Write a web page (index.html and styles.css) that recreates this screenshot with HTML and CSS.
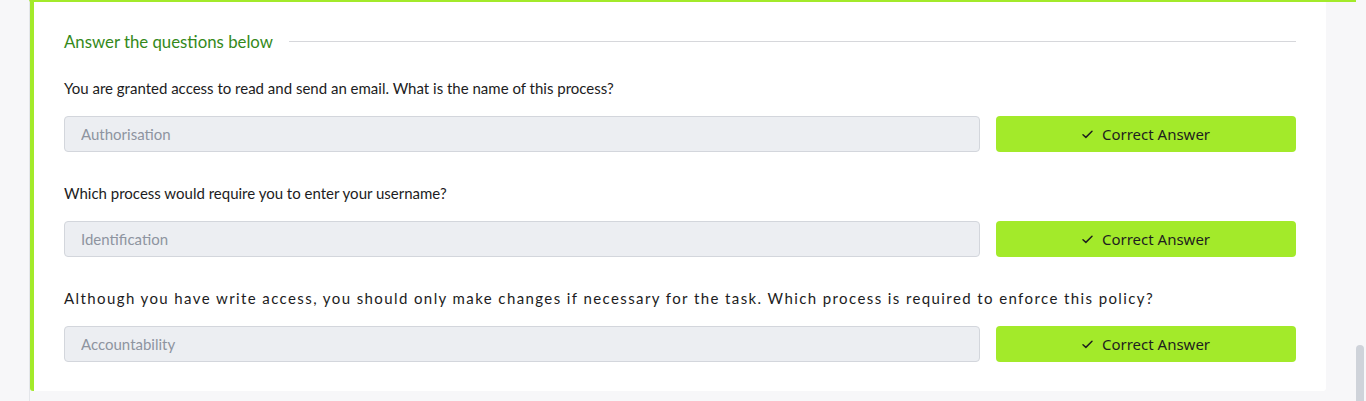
FILE: index.html
```html
<!DOCTYPE html>
<html lang="en">
<head>
<meta charset="utf-8">
<title>Answer the questions below</title>
<link rel="stylesheet" href="styles.css">
</head>
<body>
<div class="page">
  <div class="frame">
    <section class="card">
      <div class="heading">
        <h3>Answer the questions below</h3>
        <span class="rule"></span>
      </div>

      <div class="question first">
        <p class="q-text">You are granted access to read and send an email. What is the name of this process?</p>
        <div class="answer-row">
          <input class="answer" type="text" placeholder="Authorisation" disabled>
          <button class="correct" type="button">
            <svg class="check" viewBox="0 0 12 10" width="11" height="9"><path d="M1 5.2 L4.2 8.2 L11 1.5" fill="none" stroke="#1e1e1e" stroke-width="1.6" stroke-linecap="round" stroke-linejoin="round"/></svg>
            <span>Correct Answer</span>
          </button>
        </div>
      </div>

      <div class="question">
        <p class="q-text">Which process would require you to enter your username?</p>
        <div class="answer-row">
          <input class="answer" type="text" placeholder="Identification" disabled>
          <button class="correct" type="button">
            <svg class="check" viewBox="0 0 12 10" width="11" height="9"><path d="M1 5.2 L4.2 8.2 L11 1.5" fill="none" stroke="#1e1e1e" stroke-width="1.6" stroke-linecap="round" stroke-linejoin="round"/></svg>
            <span>Correct Answer</span>
          </button>
        </div>
      </div>

      <div class="question">
        <p class="q-text wide">Although you have write access, you should only make changes if necessary for the task. Which process is required to enforce this policy?</p>
        <div class="answer-row">
          <input class="answer" type="text" placeholder="Accountability" disabled>
          <button class="correct" type="button">
            <svg class="check" viewBox="0 0 12 10" width="11" height="9"><path d="M1 5.2 L4.2 8.2 L11 1.5" fill="none" stroke="#1e1e1e" stroke-width="1.6" stroke-linecap="round" stroke-linejoin="round"/></svg>
            <span>Correct Answer</span>
          </button>
        </div>
      </div>
    </section>
  </div>
</div>
<div class="scroll-thumb"></div>
</body>
</html>
```
FILE: styles.css
```css
html, body {
  margin: 0;
  padding: 0;
  height: 401px;
  overflow: hidden;
  background: #f7f7f9;
  font-family: Lato, "Open Sans", sans-serif;
}

.page {
  padding: 0 10px 0 29px;
  height: 401px;
  box-sizing: border-box;
}

.frame {
  border-top: 2px solid #a3ea2a;
  border-left: 1px solid #e4e6ea;
  height: 399px;
  padding-right: 30px;
}

.card {
  background: #ffffff;
  border-left: 4px solid #a3ea2a;
  border-bottom-left-radius: 3px;
  border-bottom-right-radius: 3px;
  padding: 28px 30px 29px 30px;
}

.heading {
  display: flex;
  align-items: center;
  gap: 16px;
  height: 24px;
}

.heading h3 {
  margin: 0;
  font-size: 16.8px;
  font-weight: 400;
  color: #34891a;
  line-height: 24px;
  white-space: nowrap;
}

.heading .rule {
  flex: 1;
  height: 1px;
  background: #d6d7db;
  margin-top: -1px;
}

.question {
  margin-top: 29px;
}

.question.first {
  margin-top: 22px;
}

.q-text {
  margin: 0 0 16px 0;
  font-size: 15px;
  line-height: 24px;
  color: #1c1c22;
  white-space: nowrap;
}

.q-text.wide {
  letter-spacing: 1.4px;
}

.answer-row {
  display: flex;
  gap: 16px;
  height: 36px;
}

.answer {
  flex: 1;
  margin: 0;
  height: 36px;
  box-sizing: border-box;
  border: 1px solid #d3d6dc;
  border-radius: 4px;
  background: #eceef2;
  padding: 0 16px;
  font-family: inherit;
  font-size: 15px;
  color: #8e94a0;
}

.answer::placeholder {
  color: #8e94a0;
  opacity: 1;
}

.correct {
  width: 300px;
  height: 36px;
  margin: 0;
  border: 0;
  border-radius: 4px;
  background: #a3ea2a;
  display: flex;
  align-items: center;
  justify-content: center;
  gap: 9px;
  font-family: "Noto Sans", sans-serif;
  font-size: 15px;
  color: #1e1e1e;
  padding: 0;
}

.check {
  display: block;
}

.scroll-thumb {
  position: absolute;
  left: 1356px;
  top: 345px;
  width: 8px;
  height: 70px;
  border-radius: 4px;
  background: #cfd3da;
}
```
